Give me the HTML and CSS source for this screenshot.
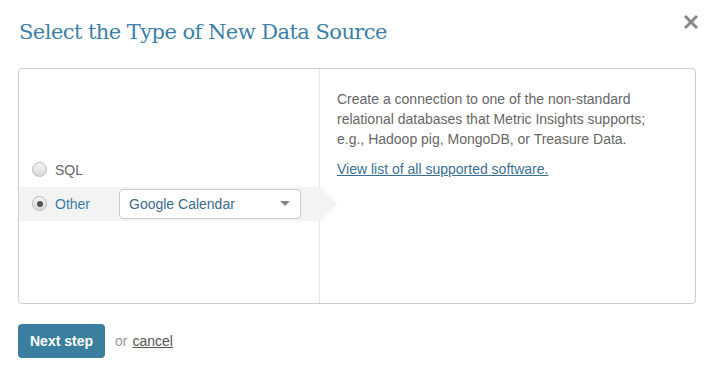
FILE: index.html
```html
<!DOCTYPE html>
<html lang="en">

<head>
  <meta charset="UTF-8">
  <title>Select the Type of New Data Source</title>
  <link rel="stylesheet" href="styles.css">
</head>

<body>
  <div class="dialog">
    <div class="dialog__head">
      <h1 class="dialog__title">Select the Type of New Data Source</h1>
      <button class="dialog__close" aria-label="Close">
        <svg width="16" height="16" viewBox="0 0 16 16">
          <path d="M2 2 L14 14 M14 2 L2 14" stroke="#888" stroke-width="3" stroke-linecap="butt" />
        </svg>
      </button>
    </div>

    <div class="panel">
      <div class="panel__types">
        <label class="type-row">
          <input type="radio" name="source-type" value="sql" />
          <span class="type-row__name">SQL</span>
        </label>
        <label class="type-row type-row--active">
          <input type="radio" name="source-type" value="other" checked />
          <span class="type-row__name">Other</span>
          <span class="select">
            <span class="select__value">Google Calendar</span>
            <span class="select__caret"></span>
          </span>
        </label>
      </div>
      <div class="panel__info">
        <p>Create a connection to one of the non-standard relational databases that Metric Insights supports; e.g., Hadoop pig, MongoDB, or Treasure Data.</p>
        <p><a href="#">View list of all supported software.</a></p>
      </div>
    </div>

    <div class="dialog__foot">
      <button class="btn-primary">Next step</button>
      <span class="or">or</span>
      <a href="#" class="cancel">cancel</a>
    </div>
  </div>
</body>

</html>
```

FILE: styles.css
```css
* {
  box-sizing: border-box;
}

body {
  margin: 0;
  font-family: 'Liberation Sans', Arial, sans-serif;
  font-size: 14px;
  color: #666;
  background: #fff;
}

.dialog {
  padding: 12px 12px 0 18px;
}

.dialog__head {
  display: flex;
  justify-content: space-between;
  align-items: flex-start;
  height: 56px;
}

.dialog__title {
  margin: 0;
  padding-left: 1px;
  font-family: 'DejaVu Serif', 'Liberation Serif', serif;
  font-weight: normal;
  font-size: 21px;
  line-height: 40px;
  color: #3b80a8;
  letter-spacing: -0.55px;
}

.dialog__close {
  border: 0;
  background: none;
  padding: 0;
  margin-top: 2px;
  cursor: pointer;
}

.panel {
  display: flex;
  width: 678px;
  height: 236px;
  border: 1px solid #ccc;
  border-radius: 4px;
}

.panel__types {
  position: relative;
  width: 301px;
  border-right: 1px solid #e3e3e3;
  display: flex;
  flex-direction: column;
  justify-content: center;
  padding-top: 1px;
}

.type-row {
  position: relative;
  display: flex;
  align-items: center;
  height: 34px;
  padding: 0 19px 0 13px;
  margin-right: -1px;
  cursor: pointer;
}

.type-row input {
  appearance: none;
  position: relative;
  width: 15px;
  height: 15px;
  margin: 0 8px 0 0;
  border: 1px solid #b9b9b9;
  border-radius: 50%;
  background: linear-gradient(#f5f5f5, #d9d9d9);
}

.type-row input:checked::after {
  content: "";
  position: absolute;
  top: 3.5px;
  left: 3.5px;
  width: 6px;
  height: 6px;
  border-radius: 50%;
  background: #555;
}

.type-row__name {
  color: #666;
}

.type-row--active {
  background: #f3f3f3;
}

.type-row--active .type-row__name {
  color: #3a7ca5;
}

.type-row--active::after {
  content: "";
  position: absolute;
  top: 0;
  right: -17px;
  border-style: solid;
  border-width: 17px 0 17px 17px;
  border-color: transparent transparent transparent #f3f3f3;
}

.select {
  display: flex;
  align-items: center;
  justify-content: space-between;
  margin-left: auto;
  width: 182px;
  height: 30px;
  padding: 0 10px 0 9px;
  background: #fff;
  border: 1px solid #ccc;
  border-radius: 4px;
  color: #3d6a8a;
}

.select__caret {
  border-style: solid;
  border-width: 5px 5px 0 5px;
  border-color: #888 transparent transparent transparent;
}

.panel__info {
  flex: 1;
  padding: 20px 28px 0 17px;
  line-height: 20px;
}

.panel__info p {
  margin: 0 0 10px;
}

.panel__info a {
  color: #3a7097;
}

.dialog__foot {
  display: flex;
  align-items: center;
  margin-top: 20px;
}

.btn-primary {
  width: 87px;
  height: 34px;
  border: 0;
  border-radius: 4px;
  background: #3a7f9f;
  color: #fff;
  font-family: 'Liberation Sans', Arial, sans-serif;
  font-weight: bold;
  font-size: 14px;
  cursor: pointer;
}

.or {
  margin-left: 10px;
  color: #999;
}

.cancel {
  margin-left: 5px;
  color: #555;
}
```
